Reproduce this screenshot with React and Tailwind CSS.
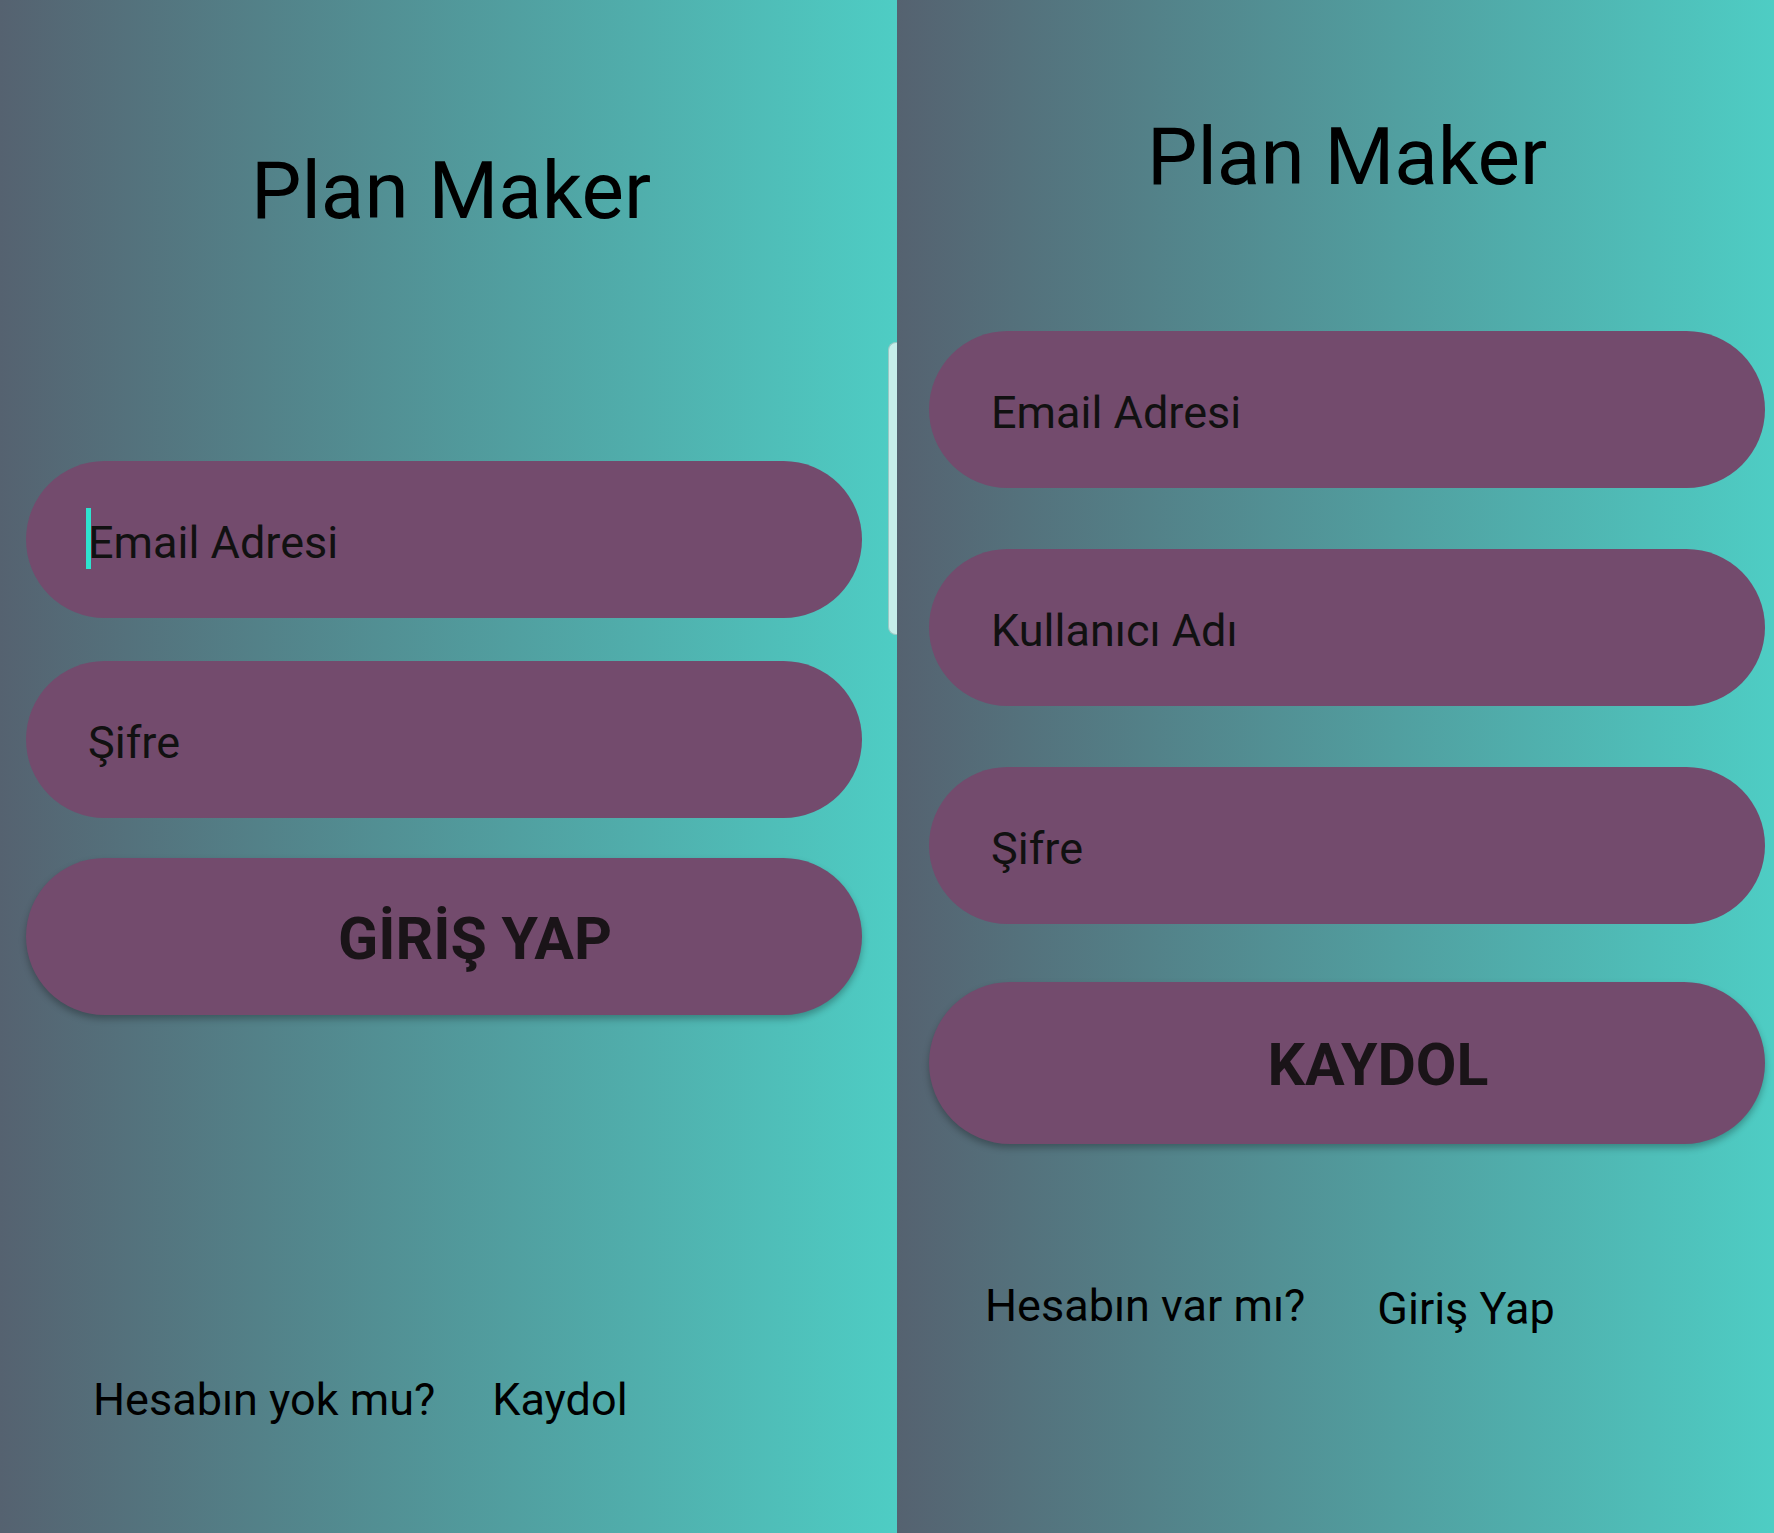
const panelBg = 'bg-[linear-gradient(to_right,#556270,#4ecdc4)]';

function Field({ children, className = '' }) {
  return (
    <div className={`h-[157px] w-[836px] rounded-full bg-[#734b6d] flex items-center pl-[62px] pt-[5px] ${className}`}>
      <span className="text-[45px] leading-none text-[#111]">{children}</span>
    </div>
  );
}

function SubmitButton({ children, className = '' }) {
  return (
    <button className={`h-[157px] w-[836px] rounded-full bg-[#734b6d] flex items-center justify-center pl-[62px] pt-[3px] shadow-[0_4px_7px_rgba(0,0,0,0.28)] ${className}`}>
      <span className="text-[59px] leading-none font-bold text-[#1a1418]">{children}</span>
    </button>
  );
}

function LoginPanel() {
  return (
    <div className={`relative w-[897px] h-[1533px] shrink-0 ${panelBg} pt-[151px] pl-[26px]`}>
      <h1 className="w-[836px] pl-[14px] text-center text-[80px] leading-none text-black">Plan Maker</h1>

      <div className="mt-[230px] h-[157px] w-[836px] rounded-full bg-[#734b6d] flex items-center pl-[62px] pt-[5px]">
        <span className="relative text-[45px] leading-none text-[#111]">
          <span className="absolute left-[-2px] top-[-12px] h-[61px] w-[5px] bg-[#2ee3cf]" />
          Email Adresi
        </span>
      </div>
      <Field className="mt-[43px]">Şifre</Field>
      <SubmitButton className="mt-[40px]">GİRİŞ YAP</SubmitButton>

      <div className="mt-[362px] pl-[67px] flex items-start text-[45px] leading-none text-black">
        <span>Hesabın yok mu?</span>
        <span className="ml-[57px]">Kaydol</span>
      </div>

      {/* edge panel handle */}
      <div className="absolute right-0 top-[342px] h-[293px] w-[9px] rounded-l-[8px] bg-[#c6eeea] border border-r-0 border-[#9cc9c5]" />
    </div>
  );
}

function RegisterPanel() {
  return (
    <div className={`w-[877px] h-[1533px] ${panelBg} pt-[117px] pl-[32px]`}>
      <h1 className="w-[836px] text-center text-[80px] leading-none text-black">Plan Maker</h1>

      <Field className="mt-[134px]">Email Adresi</Field>
      <Field className="mt-[61px]">Kullanıcı Adı</Field>
      <Field className="mt-[61px]">Şifre</Field>
      <SubmitButton className="mt-[58px] h-[162px]">KAYDOL</SubmitButton>

      <div className="mt-[139px] pl-[56px] flex items-start text-[45px] leading-none text-black">
        <span>Hesabın var mı?</span>
        <span className="ml-[72px] mt-[3px]">Giriş Yap</span>
      </div>
    </div>
  );
}

export default function App() {
  return (
    <div className="flex w-[1774px] h-[1533px] overflow-hidden font-['Roboto',sans-serif]">
      <LoginPanel />
      <RegisterPanel />
    </div>
  );
}
